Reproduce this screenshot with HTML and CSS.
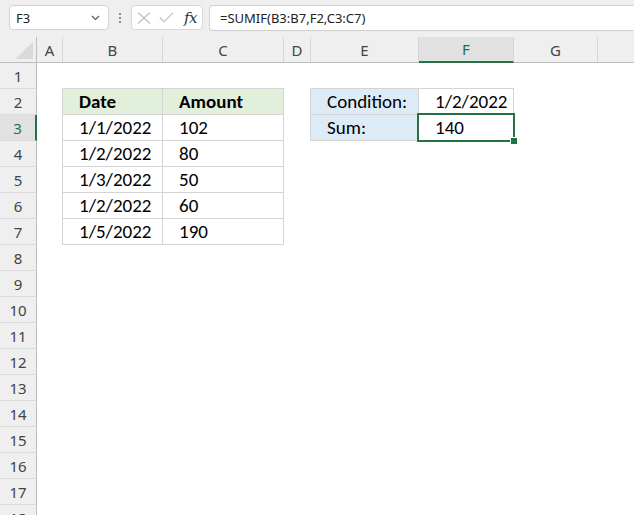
FILE: index.html
```html
<!DOCTYPE html>
<html>
<head>
<meta charset="utf-8">
<link rel="stylesheet" href="styles.css">
</head>
<body>
<div class="toolbar">
  <div class="namebox">
    <span>F3</span>
    <svg class="chev" width="9" height="6" viewBox="0 0 9 6"><path d="M1 1 L4.5 4.5 L8 1" fill="none" stroke="#555" stroke-width="1.1"/></svg>
  </div>
  <div class="vdots"><i></i><i></i><i></i></div>
  <div class="fxbox">
    <svg width="14" height="12" viewBox="0 0 14 12"><path d="M1 0.5 L13 11.5 M13 0.5 L1 11.5" stroke="#bcbcbc" stroke-width="1.1" fill="none"/></svg>
    <svg width="15" height="11" viewBox="0 0 15 11"><path d="M0.8 5.5 L5 9.8 L14.2 0.6" stroke="#bcbcbc" stroke-width="1.1" fill="none"/></svg>
    <span class="fx">fx</span>
  </div>
  <div class="formula">=SUMIF(B3:B7,F2,C3:C7)</div>
</div>
<div class="sheet">
  <div class="corner"><svg width="18" height="17" viewBox="0 0 18 17"><polygon points="18,0 18,17 0,17" fill="#dadada"/></svg></div>
  <div class="ch">A</div>
  <div class="ch">B</div>
  <div class="ch">C</div>
  <div class="ch">D</div>
  <div class="ch">E</div>
  <div class="ch sel">F</div>
  <div class="ch">G</div>
  <div class="ch last"></div>

  <div class="rh">1</div>
  <div class="rh">2</div>
  <div class="rh sel">3</div>
  <div class="rh">4</div>
  <div class="rh">5</div>
  <div class="rh">6</div>
  <div class="rh">7</div>
  <div class="rh">8</div>
  <div class="rh">9</div>
  <div class="rh">10</div>
  <div class="rh">11</div>
  <div class="rh">12</div>
  <div class="rh">13</div>
  <div class="rh">14</div>
  <div class="rh">15</div>
  <div class="rh">16</div>
  <div class="rh">17</div>
  <div class="rh">18</div>

  <div class="tbl data">
    <div class="c hd">Date</div><div class="c hd">Amount</div>
    <div class="c">1/1/2022</div><div class="c">102</div>
    <div class="c">1/2/2022</div><div class="c">80</div>
    <div class="c">1/3/2022</div><div class="c">50</div>
    <div class="c">1/2/2022</div><div class="c">60</div>
    <div class="c">1/5/2022</div><div class="c">190</div>
  </div>

  <div class="tbl crit">
    <div class="c lbl">Condition:</div><div class="c">1/2/2022</div>
    <div class="c lbl">Sum:</div><div class="c active">140<span class="selbox"><span class="handle"></span></span></div>
  </div>
</div>
</body>
</html>
```
FILE: styles.css
```css
html, body {
  margin: 0;
  padding: 0;
  background: #ffffff;
  overflow: hidden;
  width: 634px;
  height: 515px;
}

.toolbar {
  height: 37px;
  background: #efefef;
  display: flex;
  align-items: flex-start;
  padding: 5px 0 0 9px;
  box-sizing: border-box;
  font-family: "Noto Sans", "Open Sans", sans-serif;
}

.namebox {
  width: 100px;
  height: 25px;
  box-sizing: border-box;
  background: #fff;
  border: 1px solid #d2d2d2;
  border-radius: 4px;
  display: flex;
  align-items: center;
  justify-content: space-between;
  padding: 0 8px 0 6px;
  font-size: 13px;
  color: #222;
}

.chev { margin-top: 1px; }

.vdots {
  width: 22px;
  height: 25px;
  display: flex;
  flex-direction: column;
  align-items: center;
  justify-content: center;
  gap: 2px;
}
.vdots i {
  display: block;
  width: 2px;
  height: 2px;
  background: #8a8a8a;
}

.fxbox {
  width: 72px;
  height: 25px;
  box-sizing: border-box;
  background: #fff;
  border: 1px solid #d8d8d8;
  border-radius: 4px;
  display: flex;
  align-items: center;
  padding: 0 0 0 5px;
  gap: 8px;
}
.fx {
  font-family: "DejaVu Serif", "Liberation Serif", serif;
  font-style: italic;
  font-size: 15px;
  color: #333;
  margin-left: 2px;
  letter-spacing: -0.5px;
}

.formula {
  margin-left: 6px;
  flex: 1;
  height: 26px;
  box-sizing: border-box;
  background: #fff;
  border: 1px solid #d2d2d2;
  border-right: none;
  border-radius: 4px 0 0 4px;
  padding: 0 0 0 10px;
  font-size: 13px;
  line-height: 24px;
  color: #222;
}

.sheet {
  display: grid;
  grid-template-columns: 37px 26px 100px 121px 27px 108px 95px 84px 1fr;
  grid-auto-rows: 26px;
  font-family: "Noto Sans", "Open Sans", sans-serif;
}

.corner {
  background: #efefef;
  border-right: 1px solid #bdbdbd;
  border-bottom: 1px solid #bdbdbd;
  box-sizing: border-box;
  display: flex;
  align-items: flex-end;
  justify-content: flex-end;
  padding: 0 3px 3px 0;
}

.ch {
  background: #efefef;
  border-right: 1px solid #d6d6d6;
  border-bottom: 1px solid #bdbdbd;
  box-sizing: border-box;
  display: flex;
  align-items: center;
  justify-content: center;
  font-size: 15px;
  color: #444;
}
.ch.sel {
  background: #e1e1e1;
  color: #1e7145;
  border-bottom: 2px solid #217346;
}
.ch.last { border-right: none; }

.rh {
  grid-column: 1;
  background: #efefef;
  border-right: 1px solid #bdbdbd;
  border-bottom: 1px solid #dadada;
  box-sizing: border-box;
  display: flex;
  align-items: center;
  justify-content: center;
  font-size: 15px;
  color: #444;
}
.rh.sel {
  background: #e1e1e1;
  color: #1e7145;
  border-right: 2px solid #217346;
}

.tbl {
  display: grid;
  grid-auto-rows: 26px;
  margin: -1px 0 0 -1px;
  border-top: 1px solid #d4d4d4;
  border-left: 1px solid #d4d4d4;
  font-family: "Carlito", "Lato", sans-serif;
  font-size: 19px;
  color: #000;
}
.tbl.data {
  grid-column: 3 / 5;
  grid-row: 3 / 9;
  grid-template-columns: 100px 121px;
}
.tbl.crit {
  grid-column: 6 / 8;
  grid-row: 3 / 5;
  grid-template-columns: 108px 95px;
}

.c {
  border-right: 1px solid #d4d4d4;
  border-bottom: 1px solid #d4d4d4;
  box-sizing: border-box;
  padding: 0 0 0 16px;
  line-height: 26px;
  white-space: nowrap;
}
.c.hd {
  background: #e2efda;
  font-weight: bold;
}
.c.lbl {
  background: #ddebf7;
}
.c.active {
  position: relative;
}
.selbox {
  position: absolute;
  left: -2px;
  top: -2px;
  width: 98px;
  height: 29px;
  box-sizing: border-box;
  border: 2px solid #217346;
}
.handle {
  position: absolute;
  right: -4px;
  bottom: -4px;
  width: 6px;
  height: 6px;
  background: #217346;
  border: 1px solid #fff;
  box-sizing: content-box;
  margin: -1px;
}
```
